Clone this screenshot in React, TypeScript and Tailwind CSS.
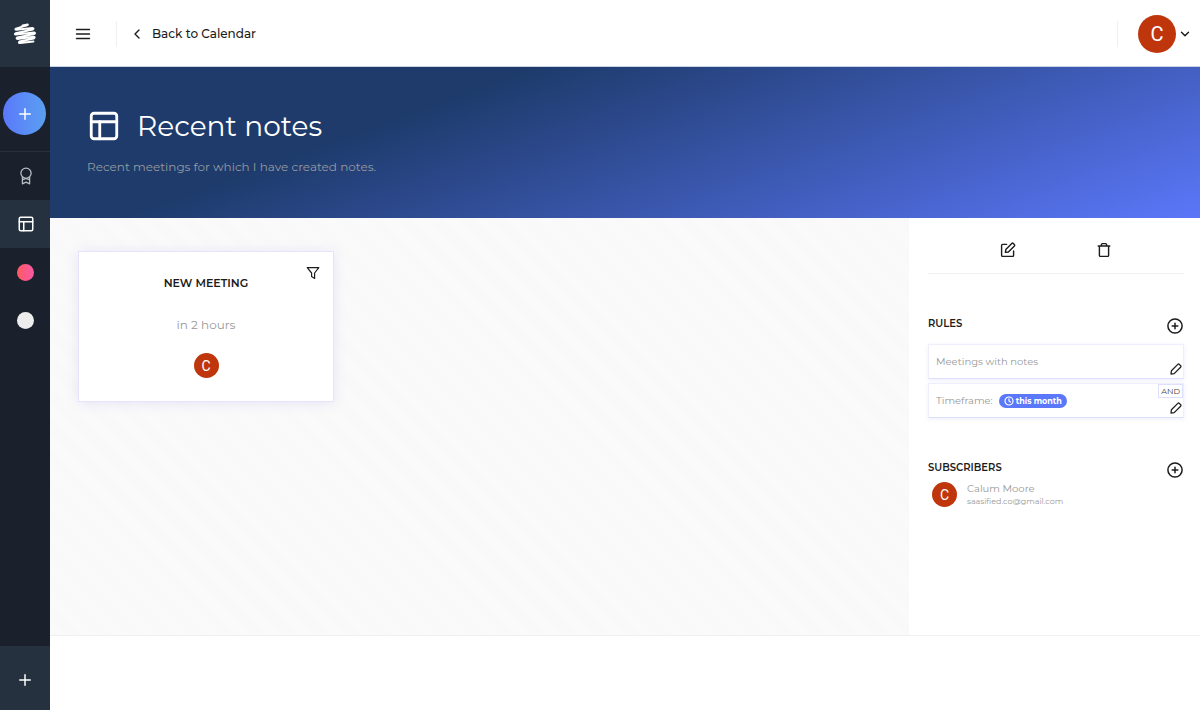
import type { ReactNode } from "react"
import { ChevronDown, ChevronLeft, PanelsTopLeft, Plus } from "lucide-react"
import { clsx } from "clsx"

interface IconProps {
  className?: string
}

function Logo() {
  return (
    <svg
      viewBox="0 0 24 22"
      className="h-[22px] w-6"
      fill="none"
      stroke="currentColor"
      strokeWidth="2"
      strokeLinecap="round"
      strokeLinejoin="round"
    >
      <path d="M13.8 2.2 L3 5.6 Q1.6 6.6 3.4 6.8 L19.4 5 Q21.4 5.2 19.8 6.4 L2.6 10.2 Q1 11.4 3 11.6 L21 9.4 Q23 9.8 21.2 11 L4.2 14.6 Q2.8 15.8 4.6 16 L20.6 13.8 Q22.6 14.2 20.8 15.4 L6.4 18.6 Q5 20.2 7.2 20 L20.4 18.6" />
      <path d="M9.6 2.6 L14.6 1.8" strokeWidth="2.4" />
    </svg>
  )
}

function MenuIcon({ className }: IconProps) {
  return (
    <svg viewBox="0 0 16 12" className={className} fill="none" stroke="currentColor" strokeWidth="1.4" strokeLinecap="round">
      <path d="M1.5 1.5h13M1.5 6h13M1.5 10.5h13" />
    </svg>
  )
}

function BadgeIcon({ className }: IconProps) {
  return (
    <svg viewBox="0 0 14 18" className={className} fill="none" stroke="currentColor" strokeWidth="1.3" strokeLinejoin="round">
      <circle cx="7" cy="6.2" r="5.1" />
      <path d="M3.4 10v6.8L7 15.2l3.6 1.6V10M3.4 13L7 11.4l3.6 1.6" />
    </svg>
  )
}

function FunnelIcon({ className }: IconProps) {
  return (
    <svg viewBox="0 0 14 14" className={className} fill="none" stroke="currentColor" strokeWidth="1.2" strokeLinejoin="round">
      <path d="M1.2 1.6h11.6L8.6 7v5.4L5.6 10.6V7z" />
    </svg>
  )
}

function EditIcon({ className }: IconProps) {
  return (
    <svg viewBox="0 0 16 16" className={className} fill="none" stroke="currentColor" strokeWidth="1.4" strokeLinecap="round" strokeLinejoin="round">
      <path d="M6.6 2.4H2.6a1 1 0 0 0-1 1v10a1 1 0 0 0 1 1h10a1 1 0 0 0 1-1V9" />
      <path d="M5.4 10.4l.4-3 6-6q.7-.6 1.4 0l1.2 1.2q.6.7 0 1.4l-6 6z" />
    </svg>
  )
}

function TrashIcon({ className }: IconProps) {
  return (
    <svg viewBox="0 0 16 16" className={className} fill="none" stroke="currentColor" strokeWidth="1.4" strokeLinecap="round" strokeLinejoin="round">
      <path d="M2.2 4h11.6M3.4 4v9.4a1 1 0 0 0 1 1h7.2a1 1 0 0 0 1-1V4M5.4 4V2.6a1 1 0 0 1 1-1h3.2a1 1 0 0 1 1 1V4" />
    </svg>
  )
}

function PencilIcon({ className }: IconProps) {
  return (
    <svg viewBox="0 0 12 12" className={className} fill="none" stroke="currentColor" strokeWidth="1.3" strokeLinejoin="round">
      <path d="M1 11l.4-3.2 6.4-6.4q.8-.7 1.5 0l1.3 1.3q.7.7 0 1.5L4.2 10.6z" />
    </svg>
  )
}

function CirclePlusIcon({ className }: IconProps) {
  return (
    <svg viewBox="0 0 16 16" className={className} fill="none" stroke="currentColor" strokeWidth="1.5" strokeLinecap="round">
      <circle cx="8" cy="8" r="7.1" />
      <path d="M8 5.2v5.6M5.2 8h5.6" />
    </svg>
  )
}

function ClockIcon({ className }: IconProps) {
  return (
    <svg viewBox="0 0 10 10" className={className} fill="none" stroke="currentColor" strokeWidth="1.2" strokeLinecap="round">
      <circle cx="5" cy="5" r="4" />
      <path d="M5 2.8V5l1.4 1" />
    </svg>
  )
}

function Avatar({ large }: { large?: boolean }) {
  return (
    <span
      className={clsx(
        "flex shrink-0 items-center justify-center rounded-full bg-[#bf360c] font-['Roboto',sans-serif] text-white",
        large ? "size-[38px] text-xl" : "size-[25px] text-sm"
      )}
    >
      C
    </span>
  )
}

function Sidebar() {
  return (
    <nav className="flex w-[50px] shrink-0 flex-col bg-[#1b212c] text-white">
      <a href="#" aria-label="Home" className="flex h-[67px] items-center justify-center bg-[#25313f]">
        <Logo />
      </a>
      <div className="flex h-[85px] items-center border-b border-[#27303b] pt-2 pl-[3px]">
        <button
          aria-label="Create"
          className="flex size-[43px] items-center justify-center rounded-full bg-linear-to-r from-[#5b78fb] to-[#5b9ff0] pt-0.5"
        >
          <Plus className="size-[18px]" strokeWidth={2} />
        </button>
      </div>
      <a href="#" aria-label="Awards" className="flex h-12 items-center justify-center pl-0.5 text-[#b8bdc4]">
        <BadgeIcon className="h-[18px] w-3.5" />
      </a>
      <a href="#" aria-label="Recent notes" className="flex h-12 items-center justify-center bg-[#25313f] pl-0.5">
        <PanelsTopLeft className="size-[18px]" strokeWidth={2} />
      </a>
      <a href="#" aria-label="Pink board" className="flex h-12 items-center justify-center pl-px">
        <span className="size-[17px] rounded-full bg-linear-to-r from-[#ff5a5f] to-[#f857a6]" />
      </a>
      <a href="#" aria-label="White board" className="flex h-12 items-center justify-center pl-px">
        <span className="size-[17px] rounded-full bg-[#ededed]" />
      </a>
      <button aria-label="Add board" className="mt-auto flex h-16 items-center justify-center bg-[#25313f] pt-1">
        <Plus className="size-[18px]" strokeWidth={2} />
      </button>
    </nav>
  )
}

function TopBar() {
  return (
    <header className="flex h-[67px] shrink-0 items-center border-b border-[#c9d3e4] px-2 pt-px">
      <button aria-label="Menu" className="px-[17px]">
        <MenuIcon className="h-3 w-4" />
      </button>
      <a href="#" className="ml-2 flex h-[26px] items-center gap-[7px] border-l border-[#f0f0f0] pl-3 text-xs font-medium">
        <ChevronLeft className="size-4" strokeWidth={2} />
        Back to Calendar
      </a>
      <button aria-label="Account" className="ml-auto flex items-center gap-0.5">
        <span className="mr-[18px] h-[26px] w-px bg-[#f0f0f0]" />
        <Avatar large />
        <ChevronDown className="size-3.5" strokeWidth={2.5} />
      </button>
    </header>
  )
}

function Banner() {
  return (
    <section className="h-[151px] shrink-0 bg-[linear-gradient(160deg,#1e3b6c_31%,#5b77f9_100%)] px-[37px] pt-9 text-white">
      <div className="flex items-center gap-4">
        <PanelsTopLeft className="size-[34px]" strokeWidth={2} />
        <h1 className="text-[28px] leading-[46px]">Recent notes</h1>
      </div>
      <p className="mt-2 text-xs leading-5 text-[#969a9f]">Recent meetings for which I have created notes.</p>
    </section>
  )
}

function MeetingCard() {
  return (
    <article className="relative flex h-[151px] w-[256px] flex-col items-center border border-[#e6e4fb] bg-white pt-[21px] shadow-[0_1px_12px_rgba(120,110,230,0.15)]">
      <h2 className="text-[11px] leading-5 font-semibold">NEW MEETING</h2>
      <p className="mt-[22px] text-xs leading-5 text-[#999]">in 2 hours</p>
      <div className="mt-[18px]">
        <Avatar />
      </div>
      <button aria-label="Filter" className="absolute top-3.5 right-[13px]">
        <FunnelIcon className="size-3.5" />
      </button>
    </article>
  )
}

function PanelHeading({ title, action }: { title: string; action: string }) {
  return (
    <div className="flex items-start justify-between pr-px">
      <h2 className="text-[10px] leading-4 font-semibold">{title}</h2>
      <button aria-label={action} className="pt-0.5">
        <CirclePlusIcon className="size-4" />
      </button>
    </div>
  )
}

function Rule({ children, joiner }: { children: ReactNode; joiner?: string }) {
  return (
    <li className="relative flex h-[35px] items-center border border-[#eeeefd] border-b-[#dfe0fc] bg-white px-[7px] text-[10px] text-[#999] shadow-[0_1px_4px_rgba(110,110,240,0.12)]">
      {children}
      {joiner && (
        <span className="absolute top-0 right-0 border border-[#dfe0fc] bg-white px-0.5 text-[8px] leading-3 text-[#444]">
          {joiner}
        </span>
      )}
      <button aria-label="Edit rule" className="absolute right-px bottom-[3px] text-[#222]">
        <PencilIcon className="size-3" />
      </button>
    </li>
  )
}

function SidePanel() {
  return (
    <aside className="w-[291px] shrink-0 bg-white pr-4 pl-[19px]">
      <div className="flex h-14 items-center justify-center gap-20 border-b border-[#f0f0f0] pt-2">
        <button aria-label="Edit board">
          <EditIcon className="size-4" />
        </button>
        <button aria-label="Delete board">
          <TrashIcon className="size-4" />
        </button>
      </div>
      <section className="pt-[42px]">
        <PanelHeading title="RULES" action="Add rule" />
        <ul className="mt-2.5 flex flex-col gap-1">
          <Rule>Meetings with notes</Rule>
          <Rule joiner="AND">
            Timeframe:
            <span className="ml-1.5 flex h-3.5 items-center gap-0.5 rounded-full bg-[#5b78fb] px-[5px] text-[8px] font-bold text-white">
              <ClockIcon className="size-2.5" />
              this month
            </span>
          </Rule>
        </ul>
      </section>
      <section className="pt-[42px]">
        <PanelHeading title="SUBSCRIBERS" action="Add subscriber" />
        <div className="mt-1 flex items-center gap-2.5 pl-1 text-[#999]">
          <Avatar />
          <div>
            <p className="text-[10px] leading-3">Calum Moore</p>
            <p className="text-[8px] leading-3">saasified.co@gmail.com</p>
          </div>
        </div>
      </section>
    </aside>
  )
}

export default function App() {
  return (
    <div className="flex min-h-screen bg-white font-['Montserrat','Inter',sans-serif] text-[#1c1c1c]">
      <Sidebar />
      <div className="flex min-w-0 flex-1 flex-col">
        <TopBar />
        <Banner />
        <div className="flex flex-1 border-b border-[#f0f0f0]">
          <main className="flex-1 bg-[repeating-linear-gradient(45deg,#fafafa_0px,#fafafa_11px,#f9f9f9_11px,#f9f9f9_22px)] px-7 py-[33px]">
            <MeetingCard />
          </main>
          <SidePanel />
        </div>
        <footer className="h-[74px] shrink-0" />
      </div>
    </div>
  )
}
